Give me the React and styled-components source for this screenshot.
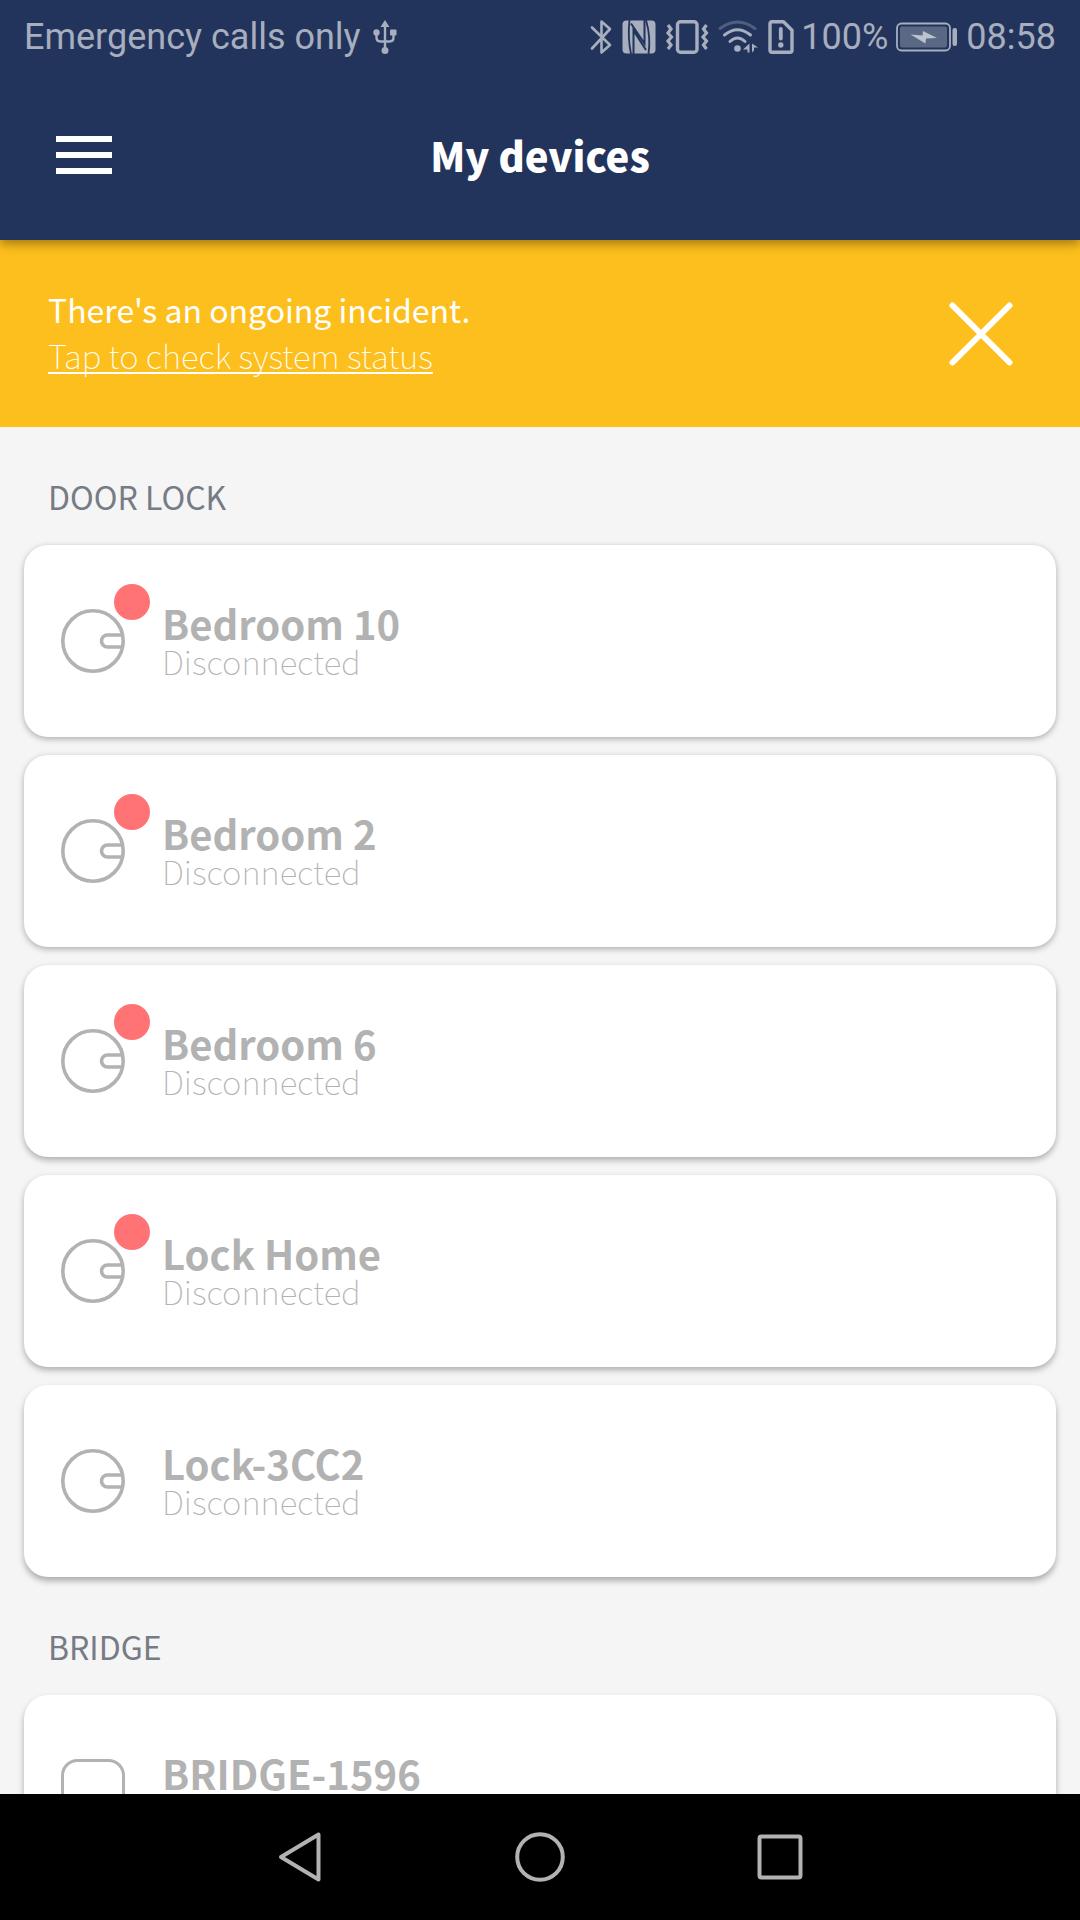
import React from 'react';
import styled, { createGlobalStyle } from 'styled-components';

const GlobalStyle = createGlobalStyle`
  *, *::before, *::after { box-sizing: border-box; }
  body {
    margin: 0;
    background: #f5f5f5;
    font-family: 'Noto Sans CJK SC', 'Source Sans Pro', 'Noto Sans', sans-serif;
  }
  h1, h2, h3, p, ul { margin: 0; padding: 0; }
  ul { list-style: none; }
  button {
    border: 0;
    padding: 0;
    background: none;
    color: inherit;
    font: inherit;
    text-align: left;
    cursor: pointer;
  }
`;

const Screen = styled.div`
  display: flex;
  flex-direction: column;
  height: 100vh;
`;

const Header = styled.header`
  position: relative;
  z-index: 1;
  flex: none;
  background: #23345c;
  color: #fff;
  box-shadow: 0 4px 10px rgba(0, 0, 0, 0.36);
`;

const StatusBar = styled.div`
  display: flex;
  align-items: center;
  justify-content: space-between;
  height: 72px;
  padding: 2px 24px 0;
  color: #a7aebe;
  font: 400 36px/40px Roboto, sans-serif;
`;

const StatusGroup = styled.div`
  display: flex;
  align-items: center;
  gap: ${(p) => p.$gap}px;
`;

const Glyph = styled.svg`
  display: block;
  flex: none;
  overflow: visible;
`;

const AppBar = styled.div`
  display: grid;
  grid-template-columns: 112px 1fr 112px;
  align-items: center;
  height: 168px;
  padding-bottom: 2px;
`;

const MenuButton = styled.button`
  display: flex;
  justify-content: flex-end;
  padding: 24px 0;
`;

const Title = styled.h1`
  text-align: center;
  font-size: 40px;
  line-height: 60px;
  font-weight: 900;
`;

const Banner = styled.section`
  flex: none;
  display: flex;
  align-items: center;
  justify-content: space-between;
  min-height: 187px;
  padding: 0 48px;
  background: #fdbf1d;
  color: #fff;
`;

const BannerText = styled.p`
  padding-bottom: 4px;
  font-size: 32px;
  line-height: 46px;
  font-weight: 400;
`;

const BannerLink = styled.a`
  display: block;
  color: inherit;
  font-size: 33px;
  font-weight: 100;
  text-decoration: underline 2px;
  text-underline-offset: 3px;
  text-decoration-skip-ink: none;
`;

const CloseButton = styled.button`
  display: flex;
  justify-content: center;
  width: 102px;
`;

const Content = styled.main`
  flex: 1;
  min-height: 0;
  overflow-y: auto;
  scrollbar-width: none;
  padding: 0 24px;
`;

const SectionLabel = styled.h2`
  padding: 45px 24px 25px;
  color: #767b85;
  font-size: 32px;
  line-height: 48px;
  font-weight: 400;
`;

const CardList = styled.ul`
  display: grid;
  gap: 18px;
`;

const Card = styled.button`
  display: flex;
  align-items: center;
  gap: 36px;
  width: 100%;
  height: 192px;
  padding: 0 36px;
  border-radius: 24px;
  background: #fff;
  color: #b2b2b2;
  box-shadow: 0 ${(p) => p.$drop}px 6px rgba(0, 0, 0, 0.3);
`;

const IconSlot = styled.span`
  position: relative;
  flex: none;
  width: 66px;
  height: 66px;
`;

const Alert = styled.span`
  position: absolute;
  top: -24px;
  right: -24px;
  width: 36px;
  height: 36px;
  border-radius: 50%;
  background: #ff7375;
`;

const CardText = styled.span`
  display: flex;
  flex-direction: column;
  padding-top: 4px;
`;

const Name = styled.strong`
  font-size: 40px;
  line-height: 36px;
  font-weight: 700;
`;

const State = styled.span`
  font-size: 33px;
  line-height: 40px;
  font-weight: 100;
`;

const NavBar = styled.nav`
  flex: none;
  display: flex;
  align-items: center;
  justify-content: center;
  height: 126px;
  background: #000;
`;

const NavButton = styled.button`
  display: flex;
  justify-content: center;
  width: 240px;
  padding: 24px 0;
  color: #b2b2b2;
`;

const UsbIcon = () => (
  <Glyph width="24" height="34" viewBox="0 0 24 34" fill="currentColor" aria-hidden="true">
    <path d="M12 0l4.500 7h-9z" />
    <path d="M12 5v25M3.500 13v4.500q0 4 4 4h9q4 0 4-4V13" fill="none" stroke="currentColor" strokeWidth="2.400" />
    <circle cx="3.500" cy="12.500" r="3.200" />
    <rect x="17" y="9.500" width="6.500" height="6" rx="1" />
    <circle cx="12" cy="30.500" r="3.500" />
  </Glyph>
);

const BluetoothIcon = () => (
  <Glyph width="22" height="34" viewBox="0 0 22 34" fill="none" stroke="currentColor" strokeWidth="2.600" strokeLinejoin="round" strokeLinecap="round" aria-hidden="true">
    <path d="M2 7.500l18 17.500-8.500 7.500V1.500L20 9 2 28.500" />
  </Glyph>
);

const NfcIcon = () => (
  <Glyph width="34" height="34" viewBox="0 0 34 34" aria-hidden="true">
    <rect x="0.500" y="0.500" width="33" height="33" rx="4" fill="currentColor" />
    <path d="M7.500 0Q5.500 17 9 34M24 0Q29 17 26.500 34" fill="none" stroke="#23345c" strokeWidth="1.800" />
    <path d="M11.500 34V10.500L24 30M9 3.500L22.500 23.500V0" fill="none" stroke="#23345c" strokeWidth="2" />
  </Glyph>
);

const VibrateIcon = () => (
  <Glyph width="42" height="34" viewBox="0 0 42 34" fill="none" stroke="currentColor" strokeWidth="3.400" aria-hidden="true">
    <rect x="11.500" y="1.700" width="19.500" height="30.500" rx="3" />
    <path d="M2 5l3 4-3 4 3.500 4-3.500 4 3 4-3 4M40.500 5l-3 4 3 4-3.500 4 3.500 4-3 4 3 4" strokeWidth="3.200" />
  </Glyph>
);

const WifiIcon = () => (
  <Glyph width="40" height="34" viewBox="0 0 40 34" fill="none" stroke="currentColor" strokeWidth="3" strokeLinecap="round" aria-hidden="true">
    <path d="M2 8.500Q19.500-4.500 37 8.500" opacity="0.350" />
    <path d="M6.500 15Q19.500 4.500 32.500 15M12 21.500Q19.500 14.500 27 21.500" />
    <circle cx="19.500" cy="28.500" r="3.300" fill="currentColor" stroke="none" />
    <path d="M31.500 23.500v9h-2v-3h-4.500zM34 23.500v9l2-2v-3h4z" fill="currentColor" stroke="none" />
  </Glyph>
);

const SimIcon = () => (
  <Glyph width="26" height="34" viewBox="0 0 26 34" fill="none" stroke="currentColor" strokeWidth="3.400" aria-hidden="true">
    <path d="M4 1.700h11.500l8.500 8.500v20q0 2-2 2H4q-2 0-2-2v-26.500q0-2 2-2z" strokeLinejoin="round" />
    <path d="M12.800 9v9.500" strokeWidth="3.800" strokeLinecap="round" />
    <circle cx="12.800" cy="25" r="2.700" fill="currentColor" stroke="none" />
  </Glyph>
);

const BatteryIcon = () => (
  <Glyph width="62" height="30" viewBox="0 0 62 30" aria-hidden="true">
    <rect x="1" y="1.500" width="53" height="27" rx="4.500" fill="none" stroke="#a7aebe" strokeWidth="1.800" />
    <rect x="4" y="4.500" width="47" height="21" rx="2" fill="#5b6883" />
    <path d="M14.500 12.500l12 1 .5-4.500 14 7-11 .5-.5 5z" fill="#bcc2ce" />
    <rect x="56.500" y="6" width="4.500" height="18" rx="2" fill="#a7aebe" />
  </Glyph>
);

const MenuIcon = () => (
  <Glyph width="56" height="38" viewBox="0 0 56 38" fill="currentColor" aria-hidden="true">
    <path d="M0 0h56v6H0zM0 16h56v6H0zM0 32h56v6H0z" />
  </Glyph>
);

const CloseIcon = () => (
  <Glyph width="64" height="64" viewBox="0 0 64 64" stroke="#fff" strokeWidth="6" strokeLinecap="round" aria-hidden="true">
    <path d="M3.500 3.500l57 57M60.500 3.500l-57 57" />
  </Glyph>
);

const LockIcon = () => (
  <Glyph width="66" height="66" viewBox="0 0 66 66" fill="none" stroke="currentColor" strokeWidth="3.600" aria-hidden="true">
    <circle cx="33" cy="33" r="30.200" />
    <path d="M62.500 27H47.500a6 6 0 0 0 0 12h15" />
  </Glyph>
);

const BridgeIcon = () => (
  <Glyph width="66" height="66" viewBox="0 0 66 66" fill="none" stroke="currentColor" strokeWidth="3" aria-hidden="true">
    <rect x="2.500" y="2.500" width="61" height="61" rx="15" />
  </Glyph>
);

const locks = [
  { name: 'Bedroom 10', alert: true, drop: 2 },
  { name: 'Bedroom 2', alert: true, drop: 2 },
  { name: 'Bedroom 6', alert: true, drop: 3 },
  { name: 'Lock Home', alert: true, drop: 3 },
  { name: 'Lock-3CC2', alert: false, drop: 4 },
];

const DeviceCard = ({ name, alert, drop, icon }) => (
  <li>
    <Card type="button" $drop={drop}>
      <IconSlot>
        {icon}
        {alert && <Alert />}
      </IconSlot>
      <CardText>
        <Name>{name}</Name>
        <State>Disconnected</State>
      </CardText>
    </Card>
  </li>
);

export default function App() {
  return (
    <Screen>
      <GlobalStyle />
      <Header>
        <StatusBar>
          <StatusGroup $gap={12}>
            <span>Emergency calls only</span>
            <UsbIcon />
          </StatusGroup>
          <StatusGroup $gap={7}>
            <StatusGroup $gap={10}>
              <BluetoothIcon />
              <NfcIcon />
              <VibrateIcon />
              <WifiIcon />
              <SimIcon />
            </StatusGroup>
            <StatusGroup $gap={8}>
              <span>100%</span>
              <BatteryIcon />
              <span>08:58</span>
            </StatusGroup>
          </StatusGroup>
        </StatusBar>
        <AppBar>
          <MenuButton type="button" aria-label="Menu">
            <MenuIcon />
          </MenuButton>
          <Title>My devices</Title>
        </AppBar>
      </Header>
      <Banner>
        <BannerText>
          There's an ongoing incident.
          <BannerLink href="#status">Tap to check system status</BannerLink>
        </BannerText>
        <CloseButton type="button" aria-label="Close">
          <CloseIcon />
        </CloseButton>
      </Banner>
      <Content>
        <SectionLabel>DOOR LOCK</SectionLabel>
        <CardList>
          {locks.map((lock) => (
            <DeviceCard key={lock.name} {...lock} icon={<LockIcon />} />
          ))}
        </CardList>
        <SectionLabel>BRIDGE</SectionLabel>
        <CardList>
          <DeviceCard name="BRIDGE-1596" drop={4} icon={<BridgeIcon />} />
        </CardList>
      </Content>
      <NavBar>
        <NavButton type="button" aria-label="Back">
          <Glyph width="44" height="50" viewBox="0 0 44 50" fill="none" stroke="currentColor" strokeWidth="4" strokeLinejoin="round" aria-hidden="true">
            <path d="M40.500 2.500v45L3 25z" />
          </Glyph>
        </NavButton>
        <NavButton type="button" aria-label="Home">
          <Glyph width="50" height="50" viewBox="0 0 50 50" fill="none" stroke="currentColor" strokeWidth="4" aria-hidden="true">
            <circle cx="25" cy="25" r="22.800" />
          </Glyph>
        </NavButton>
        <NavButton type="button" aria-label="Recent apps">
          <Glyph width="46" height="46" viewBox="0 0 46 46" fill="none" stroke="currentColor" strokeWidth="4" aria-hidden="true">
            <rect x="2.500" y="2.500" width="41" height="41" rx="2" />
          </Glyph>
        </NavButton>
      </NavBar>
    </Screen>
  );
}
